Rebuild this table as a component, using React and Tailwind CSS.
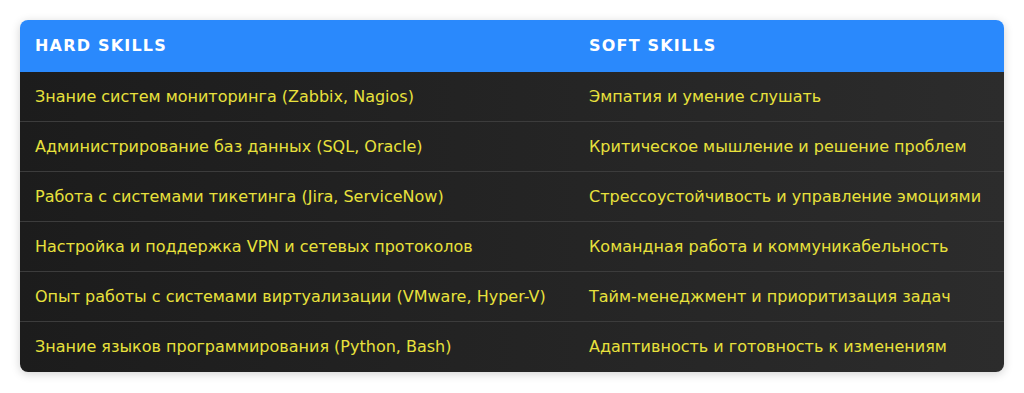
const rows = [
  ["Знание систем мониторинга (Zabbix, Nagios)", "Эмпатия и умение слушать"],
  ["Администрирование баз данных (SQL, Oracle)", "Критическое мышление и решение проблем"],
  ["Работа с системами тикетинга (Jira, ServiceNow)", "Стрессоустойчивость и управление эмоциями"],
  ["Настройка и поддержка VPN и сетевых протоколов", "Командная работа и коммуникабельность"],
  ["Опыт работы с системами виртуализации (VMware, Hyper-V)", "Тайм-менеджмент и приоритизация задач"],
  ["Знание языков программирования (Python, Bash)", "Адаптивность и готовность к изменениям"],
];

export default function App() {
  return (
    <main className="min-h-screen bg-white p-5 font-['DejaVu_Sans',sans-serif]">
      <div className="overflow-hidden rounded-lg shadow-[0_2px_10px_rgba(0,0,0,0.18)]">
        <div className="grid grid-cols-[554px_1fr] bg-[#2a89fc] text-[16px] font-bold uppercase leading-[22px] tracking-[1.2px] text-white">
          <div className="px-[15px] py-[15px]">Hard Skills</div>
          <div className="px-[15px] py-[15px]">Soft Skills</div>
        </div>
        <div className="bg-linear-to-r from-[#1c1c1c] to-[#2c2c2c] text-[16px] leading-[19px] text-[#e8e13c]">
          {rows.map(([hard, soft], i) => (
            <div
              key={i}
              className={`grid grid-cols-[554px_1fr] ${i < rows.length - 1 ? "border-b border-[#3c3c3c]" : "pb-px"}`}
            >
              <div className="px-[15px] py-[15px]">{hard}</div>
              <div className="px-[15px] py-[15px]">{soft}</div>
            </div>
          ))}
        </div>
      </div>
    </main>
  );
}
